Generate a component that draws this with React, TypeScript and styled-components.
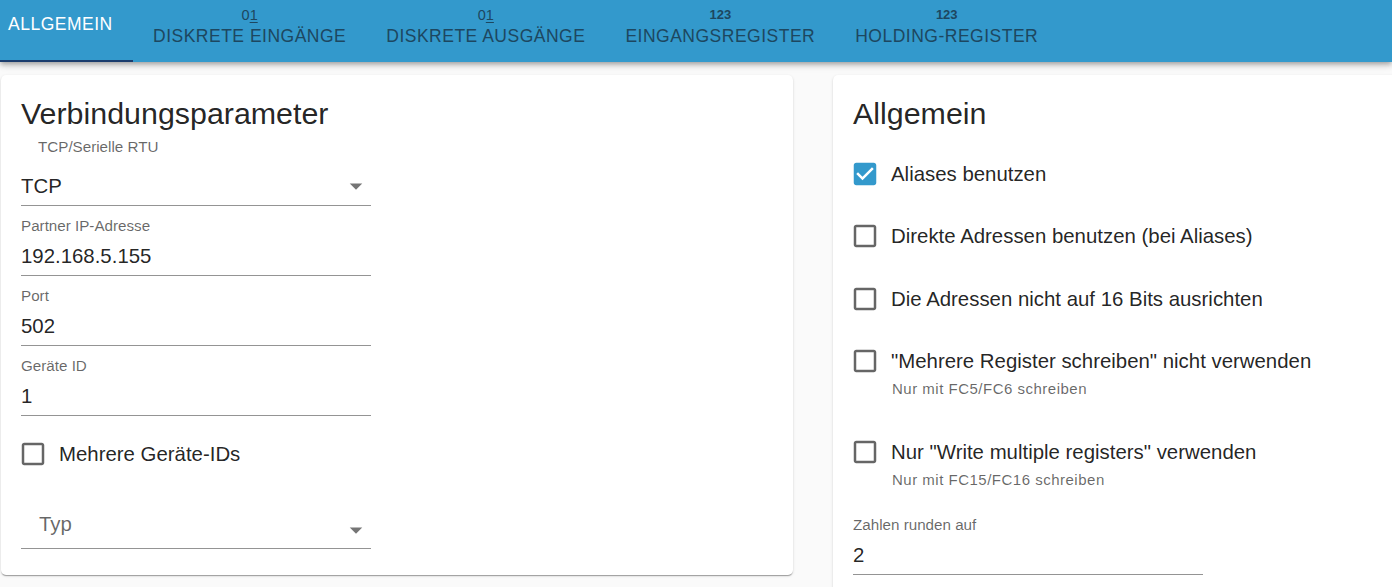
import React from "react";
import styled, { createGlobalStyle } from "styled-components";

const GlobalStyle = createGlobalStyle`
  html, body {
    margin: 0;
    padding: 0;
    background: #fafafa;
    font-family: "Liberation Sans", Arial, sans-serif;
    overflow: hidden;
  }
  * { box-sizing: border-box; }
`;

const Page = styled.div`
  width: 1392px;
  height: 587px;
  overflow: hidden;
`;

const TabBar = styled.nav`
  position: relative;
  z-index: 2;
  display: flex;
  height: 62px;
  background: #3399cc;
  box-shadow: 0px 2px 4px -1px rgba(0, 0, 0, 0.2), 0px 4px 5px 0px rgba(0, 0, 0, 0.14),
    0px 1px 10px 0px rgba(0, 0, 0, 0.12);
`;

const Tab = styled.div<{ $active?: boolean; $first?: boolean }>`
  position: relative;
  display: flex;
  flex-direction: column;
  align-items: ${(p) => (p.$first ? "flex-start" : "center")};
  width: ${(p) => (p.$first ? "133px" : "auto")};
  padding: ${(p) => (p.$first ? "13px 0 0 8px" : "7px 20px 0")};
  color: ${(p) => (p.$active ? "#ffffff" : "#1d4760")};
  cursor: pointer;
  ${(p) =>
    p.$active &&
    `
    &::after {
      content: "";
      position: absolute;
      left: 0;
      right: 0;
      bottom: 0;
      height: 2.5px;
      background: #1b3d6e;
    }
  `}
`;

const TabIcon = styled.div<{ $bold?: boolean }>`
  height: 16px;
  font-size: ${(p) => (p.$bold ? "13px" : "14.5px")};
  line-height: 16px;
  font-weight: ${(p) => (p.$bold ? 700 : 400)};
  margin-bottom: 2px;
  u {
    text-decoration-thickness: 1px;
    text-underline-offset: 2px;
  }
`;

const TabLabel = styled.div`
  font-size: 17.5px;
  line-height: 22px;
  letter-spacing: 0.5px;
  text-transform: uppercase;
  white-space: nowrap;
`;

const Content = styled.main`
  display: grid;
  grid-template-columns: 792px 792px;
  column-gap: 40px;
  align-items: start;
  padding: 13px 0 0 1px;
`;

const Card = styled.section`
  background: #ffffff;
  border-radius: 5px;
  box-shadow: 0px 2px 1px -1px rgba(0, 0, 0, 0.2), 0px 1px 1px 0px rgba(0, 0, 0, 0.14),
    0px 1px 3px 0px rgba(0, 0, 0, 0.12);
  padding: 20px 20px 26px;
  color: rgba(0, 0, 0, 0.87);
`;

const CardTitle = styled.h2`
  margin: 0;
  font-size: 30.4px;
  line-height: 36px;
  font-weight: 400;
  color: rgba(0, 0, 0, 0.87);
`;

const Field = styled.div<{ $mt?: number; $pt?: number }>`
  width: 350px;
  display: flex;
  flex-direction: column;
  margin-top: ${(p) => p.$mt ?? 0}px;
  padding-top: ${(p) => p.$pt ?? 10}px;
`;

const FieldLabel = styled.label<{ $indent?: number; $gap?: number }>`
  display: block;
  font-size: 15.2px;
  line-height: 20px;
  color: rgba(0, 0, 0, 0.6);
  padding-left: ${(p) => p.$indent ?? 0}px;
  margin-bottom: ${(p) => p.$gap ?? 5}px;
`;

const FieldInput = styled.div`
  display: flex;
  align-items: center;
  justify-content: space-between;
  height: 35px;
  padding-bottom: 4px;
  border-bottom: 1px solid rgba(0, 0, 0, 0.42);
  font-size: 20.4px;
  line-height: 30px;
  color: rgba(0, 0, 0, 0.87);
`;

const SelectBox = styled.div<{ $mt?: number }>`
  width: 350px;
  display: flex;
  align-items: flex-start;
  justify-content: space-between;
  height: 37px;
  margin-top: ${(p) => p.$mt ?? 0}px;
  border-bottom: 1px solid rgba(0, 0, 0, 0.42);
`;

const Placeholder = styled.span`
  padding-left: 18px;
  font-size: 20.4px;
  line-height: 24px;
  color: rgba(0, 0, 0, 0.6);
`;

const ArrowIcon = styled.svg<{ $mt?: number }>`
  width: 30px;
  height: 30px;
  flex: none;
  margin-top: ${(p) => p.$mt ?? 0}px;
  fill: rgba(0, 0, 0, 0.54);
`;

const Option = styled.div<{ $mt?: number; $helper?: boolean }>`
  display: flex;
  flex-direction: column;
  margin-top: ${(p) => p.$mt ?? 22}px;
  padding-bottom: ${(p) => (p.$helper ? 11 : 0)}px;
`;

const OptionLine = styled.label`
  display: flex;
  align-items: center;
  height: 40px;
  cursor: pointer;
`;

const CheckIcon = styled.svg<{ $checked?: boolean }>`
  width: 30px;
  height: 30px;
  flex: none;
  margin-left: -3px;
  margin-right: 11px;
  fill: ${(p) => (p.$checked ? "#3399cc" : "rgba(0, 0, 0, 0.6)")};
`;

const OptionText = styled.span`
  font-size: 20.4px;
  line-height: 24px;
  color: rgba(0, 0, 0, 0.87);
  white-space: nowrap;
`;

const Helper = styled.div`
  margin-top: -2px;
  padding-left: 39px;
  font-size: 15px;
  line-height: 20px;
  letter-spacing: 0.5px;
  color: rgba(0, 0, 0, 0.6);
  white-space: nowrap;
`;

const Arrow = ({ mt }: { mt?: number }) => (
  <ArrowIcon viewBox="0 0 24 24" $mt={mt}>
    <path d="M7 10l5 5 5-5z" />
  </ArrowIcon>
);

const Checkbox = ({ checked }: { checked?: boolean }) => (
  <CheckIcon viewBox="0 0 24 24" $checked={checked}>
    {checked ? (
      <path d="M19 3H5c-1.11 0-2 .9-2 2v14c0 1.1.89 2 2 2h14c1.11 0 2-.9 2-2V5c0-1.1-.89-2-2-2zm-9 14l-5-5 1.41-1.41L10 14.17l7.59-7.59L19 8l-9 9z" />
    ) : (
      <path d="M19 5v14H5V5h14m0-2H5c-1.1 0-2 .9-2 2v14c0 1.1.9 2 2 2h14c1.1 0 2-.9 2-2V5c0-1.1-.9-2-2-2z" />
    )}
  </CheckIcon>
);

type Opt = { text: string; checked?: boolean; helper?: string; mt?: number };

const options: Opt[] = [
  { text: "Aliases benutzen", checked: true, mt: 23 },
  { text: "Direkte Adressen benutzen (bei Aliases)" },
  { text: "Die Adressen nicht auf 16 Bits ausrichten", mt: 23 },
  { text: '"Mehrere Register schreiben" nicht verwenden', helper: "Nur mit FC5/FC6 schreiben" },
  { text: 'Nur "Write multiple registers" verwenden', helper: "Nur mit FC15/FC16 schreiben" },
];

const tabs = [
  { label: "Allgemein", active: true },
  { label: "Diskrete Eingänge", icon: "01" },
  { label: "Diskrete Ausgänge", icon: "01" },
  { label: "Eingangsregister", icon: "123" },
  { label: "Holding-Register", icon: "123" },
];

export default function App() {
  return (
    <Page>
      <GlobalStyle />
      <TabBar>
        {tabs.map((t, i) => (
          <Tab key={t.label} $active={t.active} $first={i === 0}>
            {t.icon === "01" && (
              <TabIcon>
                0<u>1</u>
              </TabIcon>
            )}
            {t.icon === "123" && <TabIcon $bold>123</TabIcon>}
            <TabLabel>{t.label}</TabLabel>
          </Tab>
        ))}
      </TabBar>
      <Content>
        <Card>
          <CardTitle>Verbindungsparameter</CardTitle>
          <Field $pt={6}>
            <FieldLabel $indent={17} $gap={14}>
              TCP/Serielle RTU
            </FieldLabel>
            <FieldInput>
              <span>TCP</span>
              <Arrow />
            </FieldInput>
          </Field>
          <Field>
            <FieldLabel>Partner IP-Adresse</FieldLabel>
            <FieldInput>192.168.5.155</FieldInput>
          </Field>
          <Field>
            <FieldLabel>Port</FieldLabel>
            <FieldInput>502</FieldInput>
          </Field>
          <Field>
            <FieldLabel>Geräte ID</FieldLabel>
            <FieldInput>1</FieldInput>
          </Field>
          <Option $mt={18}>
            <OptionLine>
              <Checkbox />
              <OptionText>Mehrere Geräte-IDs</OptionText>
            </OptionLine>
          </Option>
          <SelectBox $mt={38}>
            <Placeholder>Typ</Placeholder>
            <Arrow mt={3} />
          </SelectBox>
        </Card>
        <Card>
          <CardTitle>Allgemein</CardTitle>
          {options.map((o) => (
            <Option key={o.text} $mt={o.mt} $helper={!!o.helper}>
              <OptionLine>
                <Checkbox checked={o.checked} />
                <OptionText>{o.text}</OptionText>
              </OptionLine>
              {o.helper && <Helper>{o.helper}</Helper>}
            </Option>
          ))}
          <Field $pt={14}>
            <FieldLabel>Zahlen runden auf</FieldLabel>
            <FieldInput>2</FieldInput>
          </Field>
        </Card>
      </Content>
    </Page>
  );
}
